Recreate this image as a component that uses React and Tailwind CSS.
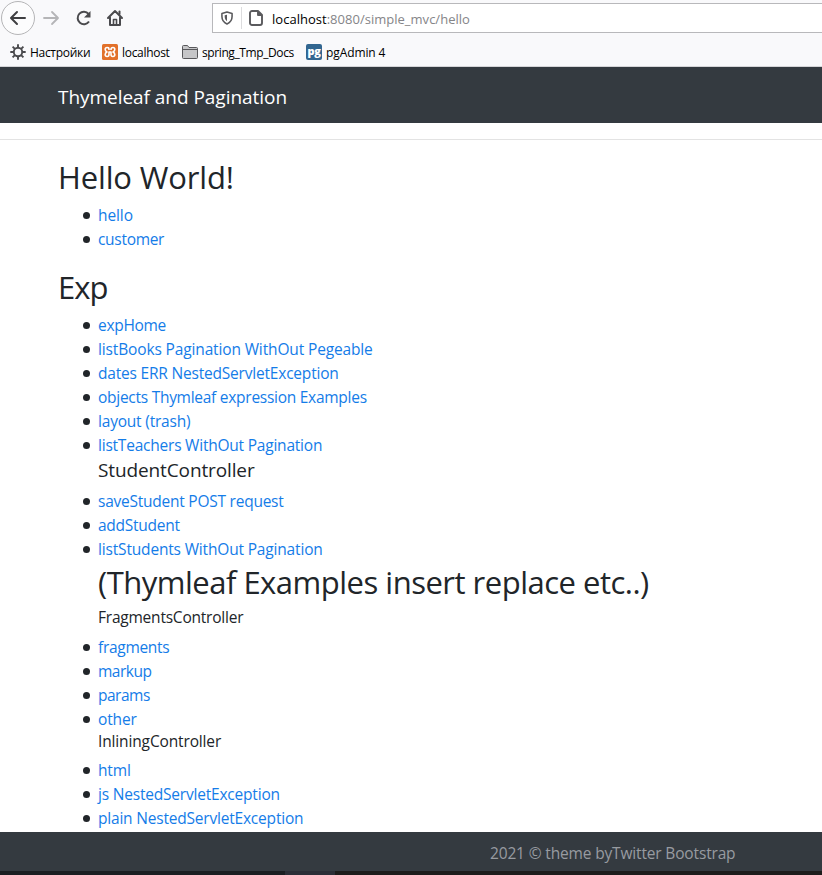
const Item = ({ children, className = "tracking-[-0.15px]" }) => (
  <li className="flex h-6 items-center">
    <span className="ml-[25px] mr-[8px] mt-px size-[7px] shrink-0 rounded-full bg-[#212529]" />
    <a className={`whitespace-nowrap text-[15.5px] leading-6 text-[#147ce8] ${className}`}>{children}</a>
  </li>
);

const Toolbar = () => (
  <div className="flex h-9 shrink-0 items-center">
    <span className="ml-px flex size-[34px] items-center justify-center rounded-full border border-[#b5b5b7] bg-[#fcfcfd]">
      <svg width="18" height="16" viewBox="0 0 18 16" fill="none" stroke="#3f3f42" strokeWidth="2" strokeLinecap="round" strokeLinejoin="round"><path d="M16 8H2.5M8 2L2 8l6 6" /></svg>
    </span>
    <svg className="ml-[7px]" width="18" height="16" viewBox="0 0 18 16" fill="none" stroke="#b5b5b7" strokeWidth="1.8" strokeLinecap="round" strokeLinejoin="round"><path d="M2 8h13.5M10 2l6 6-6 6" /></svg>
    <svg className="ml-[15px]" width="18" height="18" viewBox="0 0 18 18" fill="none" stroke="#4a4a4d" strokeWidth="2"><path d="M14 12.5A6.2 6.2 0 1 1 13.6 5" /><path d="M15.5 2V8.500H9z" fill="#4a4a4d" stroke="none" /></svg>
    <svg className="ml-[13px]" width="18" height="18" viewBox="0 0 18 18" fill="none" stroke="#4a4a4d" strokeWidth="2" strokeLinecap="round" strokeLinejoin="round"><path d="M2 9l7-7 7 7M4 8.500V16h10V8.500" /><path d="M7.500 16v-5.500h3V16" strokeWidth="1.600" /><path d="M13.500 2.500V5" /></svg>
    <div className="ml-[88px] flex h-[30px] flex-1 items-center border border-r-0 border-[#b8b8bb] bg-white">
      <svg className="ml-2" width="12" height="14" viewBox="0 0 13 15" fill="none" stroke="#5a5a5d" strokeWidth="1.700"><path d="M6.500 1L12 2.500V6c0 4-2 6.500-5.500 8C3 12.500 1 10 1 6V2.500z" strokeLinejoin="round" /><path d="M6.500 4v7C4.800 9.800 4 8.200 4 6V4.600z" fill="#5a5a5d" stroke="none" /></svg>
      <span className="ml-[8px] h-[22px] w-px bg-[#dcdcde]" />
      <svg className="ml-[7px]" width="14" height="16" viewBox="0 0 14 16" fill="none" stroke="#5a5a5d" strokeWidth="1.900" strokeLinejoin="round"><path d="M3 1h6l4 4v8a2 2 0 0 1-2 2H3a2 2 0 0 1-2-2V3a2 2 0 0 1 2-2zM9 1v4h4" /></svg>
      <span className="ml-[9px] pt-[3px] text-[13px] tracking-[0.02px] text-[#858588]"><span className="text-black">localhost</span>:8080/simple_mvc/hello</span>
    </div>
  </div>
);

const Bookmarks = () => (
  <div className="flex h-[31px] shrink-0 items-center border-b border-[#d5d5d8] pt-[2px] text-[12px] text-black">
    <svg className="ml-[10px] mr-1" width="16" height="16" viewBox="0 0 16 16" fill="none" stroke="#4a4a4d" strokeWidth="1.900"><circle cx="8" cy="8" r="4.200" /><path d="M8 .3v3.500M8 12.200v3.500M.3 8h3.500M12.200 8h3.500M2.600 2.600l2.500 2.500M10.900 10.900l2.500 2.500M2.600 13.400l2.500-2.500M10.900 5.100l2.500-2.500" /></svg>
    <span className="w-[60px] whitespace-nowrap pt-0.5 tracking-[-0.3px]">Настройки</span>
    <svg className="ml-3 mr-1" width="16" height="16" viewBox="0 0 16 16"><rect width="16" height="16" rx="1.500" fill="#e2712a" /><path d="M7 6V5.200C7 3.700 6 3.500 5 3.500S3.200 4.200 3.200 5.500 4 7.500 5 8c-1 .4-1.800 1.200-1.800 2.500s.8 2 1.900 2S7 11.800 7 10.500V8h2v2.500c0 1.300.8 2 1.900 2s1.900-.7 1.900-2S12 8.400 11 8c1-.5 1.800-1.200 1.800-2.500s-.8-2-1.800-2-2 .2-2 1.700V6" fill="none" stroke="#fff" strokeWidth="1.600" strokeLinejoin="round" /></svg>
    <span className="w-[48px] whitespace-nowrap pt-0.5 tracking-[-0.3px]">localhost</span>
    <svg className="ml-3 mr-1" width="16" height="14" viewBox="0 0 16 14" fill="#c6c6c8" stroke="#58585b"><path d="M.5 12.500v-11a1 1 0 0 1 1-1h4l1.500 2h7.500a1 1 0 0 1 1 1v9a1 1 0 0 1-1 1h-13a1 1 0 0 1-1-1zM.5 4.500h15" /></svg>
    <span className="w-[92px] whitespace-nowrap pt-0.5 tracking-[-0.4px]">spring_Tmp_Docs</span>
    <span className="ml-3 mr-1 flex size-4 items-center justify-center rounded-[2px] bg-[#326690] pb-[4px] text-[11px] font-extrabold leading-none tracking-[-0.3px] text-white">pg</span>
    <span className="whitespace-nowrap pt-0.5 tracking-[-0.1px]">pgAdmin 4</span>
  </div>
);

export default function App() {
  return (
    <div className="flex h-[875px] w-[822px] flex-col overflow-hidden bg-white font-['Open_Sans','Noto_Sans',sans-serif] text-[#212529]">
      <header className="flex h-[67px] shrink-0 flex-col bg-[#f9f9fb]">
        <Toolbar />
        <Bookmarks />
      </header>
      <nav className="flex h-14 shrink-0 items-center bg-[#343a40] pl-[58px] pt-1">
        <a className="text-[19px] tracking-[-0.04px] text-white">Thymeleaf and Pagination</a>
      </nav>
      <hr className="mt-4 shrink-0 border-t border-[#e3e3e3]" />
      <main className="h-[692px] shrink-0 pl-[58px] pt-[18px]">
        <h2 className="mb-[7px] whitespace-nowrap text-[31px] leading-[38px] tracking-[-0.15px]">Hello World!</h2>
        <ul className="mb-[17px]">
          <Item className="tracking-[-0.1px]">hello</Item>
          <Item className="tracking-[-0.3px]">customer</Item>
        </ul>
        <h2 className="mb-[7px] whitespace-nowrap text-[31px] leading-[38px] tracking-[-1px]">Exp</h2>
        <ul>
          <Item className="tracking-[-0.3px]">expHome</Item>
          <Item className="tracking-[-0.14px]">listBooks Pagination WithOut Pegeable</Item>
          <Item className="tracking-[-0.2px]">dates ERR NestedServletException</Item>
          <Item className="tracking-[-0.27px]">objects Thymleaf expression Examples</Item>
          <Item className="tracking-[-0.2px]">layout (trash)</Item>
          <Item className="tracking-[-0.22px]">listTeachers WithOut Pagination</Item>
          <h5 className="mb-[7px] ml-10 pt-px text-[19px] leading-6 tracking-[-0.12px]">StudentController</h5>
          <Item className="tracking-[-0.24px]">saveStudent POST request</Item>
          <Item className="tracking-[-0.25px]">addStudent</Item>
          <Item className="tracking-[-0.17px]">listStudents WithOut Pagination</Item>
          <h2 className="mb-[7px] ml-10 mt-[2px] whitespace-nowrap text-[31px] leading-[38px] tracking-[-0.5px]">(Thymleaf Examples insert replace etc..)</h2>
          <h6 className="mb-2 ml-10 text-[15.5px] leading-[19px] tracking-[-0.22px]">FragmentsController</h6>
          <Item className="tracking-[-0.3px]">fragments</Item>
          <Item className="tracking-[-0.5px]">markup</Item>
          <Item className="tracking-[-0.5px]">params</Item>
          <Item>other</Item>
          <h6 className="mb-[7px] ml-10 mt-px text-[15.5px] leading-[19px] tracking-[-0.14px]">InliningController</h6>
          <Item>html</Item>
          <Item className="tracking-[-0.2px]">js NestedServletException</Item>
          <Item className="tracking-[-0.2px]">plain NestedServletException</Item>
        </ul>
      </main>
      <footer className="flex h-[39px] shrink-0 items-center bg-[#343a40] pl-[490px] pt-[5px]">
        <span className="whitespace-nowrap text-[15.5px] tracking-[-0.16px] text-[#989ba0]">2021 © theme byTwitter Bootstrap</span>
      </footer>
      <div className="flex h-1 shrink-0 bg-[#1b1e22]">
        <span className="ml-[285px] w-[50px] bg-[#2b2e37]" />
        <span className="flex-1 bg-[#1d1c1b]" />
      </div>
    </div>
  );
}
